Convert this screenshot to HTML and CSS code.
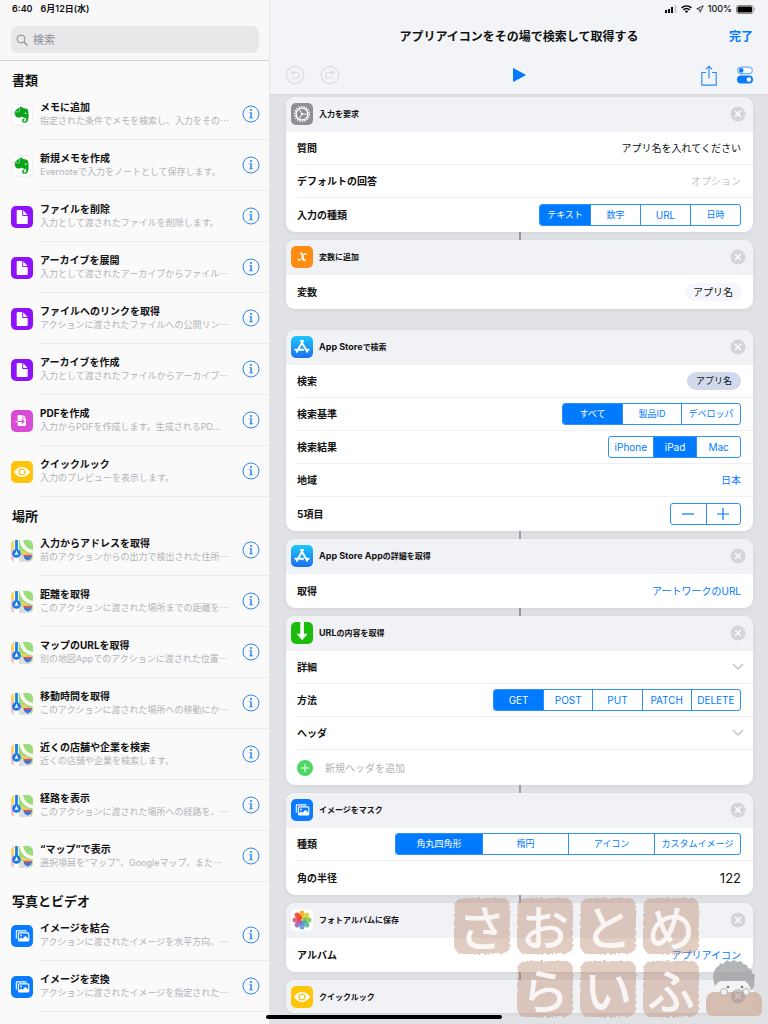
FILE: index.html
```html
<!DOCTYPE html>
<html lang="ja">
<head>
<meta charset="utf-8">
<meta name="viewport" content="width=device-width, initial-scale=1">
<title>アプリアイコンをその場で検索して取得する</title>
<link rel="stylesheet" href="styles.css">
</head>
<body>
<svg class="defs" aria-hidden="true">
  <defs>
    <linearGradient id="store-fill" x1="0" y1="0" x2="0" y2="1"><stop offset="0" stop-color="#1cc8fb"/><stop offset="1" stop-color="#1d6ff2"/></linearGradient>
    <clipPath id="app-clip"><rect width="22" height="22" rx="5"/></clipPath>
    <filter id="rough"><feTurbulence type="fractalNoise" baseFrequency="0.3" numOctaves="2" seed="4"/><feDisplacementMap in="SourceGraphic" scale="4" xChannelSelector="R" yChannelSelector="G"/></filter>
  </defs>
  <symbol id="i-evernote" viewBox="0 0 22 22">
    <rect x=".5" y=".5" width="21" height="21" rx="5" fill="#fff" stroke="#eeeeef"/>
    <path fill="#0ba51c" d="M8.600 3c1.500-.5 2.700.1 3.100.9l3.200.5c1.200.2 1.800.7 2.100 1.900.5 2 .7 4.200.6 6.200-.1 3.900-1.200 6.300-3.800 6.300-1.700 0-2.700-.9-2.700-2.300 0-1.300.8-2 2.200-2.100.5 0 .7.200.7.600 0 .4-.2.600-.6.600-.5.100-.8.400-.8.900s.4.900 1.100.9c1 0 1.500-.7 1.500-1.900 0-1.300-.7-1.700-2-1.800-1.300-.1-2.200-.5-2.700-1.200-.5.900-1.500 1.200-3.100 1-2.100-.2-3-1-3.500-3-.3-1.200-.4-2.400-.3-3.300L8 3.400z"/>
    <path fill="none" stroke="#fff" stroke-width=".5" d="M4 7.800h3.500c.7 0 1-.4 1-1V3.200"/>
    <path fill="#fff" d="M13.600 9.700c.3-.9.700-1.200 1.200-1.100.5.100.8.600.8 1.400-.6-.2-1.300-.3-2-.3z"/>
  </symbol>
  <symbol id="i-file" viewBox="0 0 22 22">
    <rect width="22" height="22" rx="5" fill="#8e12fb"/>
    <path fill="#fff" d="M6.800 4h4.400v5.200c0 .5.300.8.800.8h4.700v7c0 .7-.4 1.100-1.100 1.100H6.800c-.7 0-1.100-.4-1.100-1.100V5.100C5.700 4.400 6.100 4 6.800 4zM12.200 4.200l4.400 4.700h-4.400z"/>
  </symbol>
  <symbol id="i-pdf" viewBox="0 0 22 22">
    <rect width="22" height="22" rx="5" fill="#d94bd6"/>
    <path fill="#fff" d="M7.500 5h4v3.500H15V15c0 .6-.3.900-.9.900H7.500c-.5 0-.9-.3-.9-.9V5.900c0-.6.400-.9.900-.9zM12.200 5l2.700 2.800h-2.700z"/>
    <path fill="none" stroke="#d94bd6" stroke-width="1.200" d="M6.600 11.500h5.900M10.800 9.500l2 2-2 2"/><path stroke="#fff" d="M4.500 11.500h2"/>
  </symbol>
  <symbol id="i-eye" viewBox="0 0 22 22">
    <rect width="22" height="22" rx="5" fill="#ffc50a"/>
    <path fill="#fff" d="M3 11c4.400-6.700 11.600-6.700 16 0-4.400 6.700-11.600 6.700-16 0z"/>
    <circle cx="11" cy="11" r="3.600" fill="#ffc50a"/><circle cx="11" cy="11" r="2.300" fill="#fff"/>
  </symbol>
  <symbol id="i-map" viewBox="0 0 22 22">
    <g clip-path="url(#app-clip)">
      <rect width="22" height="22" fill="#9bdc7c"/>
      <path fill="#f7c1d2" d="M0 9h7v13H0z"/>
      <path fill="#fcd55c" d="M0 0h4v9H0z"/><path fill="#dcdde0" d="M7 13l15 8v1H7z"/>
      <path fill="#fff" d="M3 16l5-1v7H3z"/>
      <path fill="none" stroke="#fbfaf3" stroke-width="3.600" d="M10-1c1 8 5 12 13 13"/>
      <path fill="none" stroke="#fcd055" stroke-width="2.200" d="M6 11c5 1 11 3 17 8"/>
      <path stroke="#fff" stroke-width="4.500" d="M5.500 0v14"/><path stroke="#1c7fe8" stroke-width="2.800" d="M5.500 0v14"/>
      <circle cx="5.500" cy="13.500" r="4.300" fill="#1979e6"/><path fill="#fff" d="M5.500 10.600 7.500 15.300l-2-.8-2 .8z"/>
      <path fill="#3c78d2" stroke="#fff" stroke-width=".6" d="M12.500 15h8.500c.7 3-1 4.500-4.200 6-3.300-1.500-5-3-4.300-6z"/><path fill="#e2554d" d="M12.700 14.700h8l.2 1.800h-8.400z"/>
    </g>
  </symbol>
  <symbol id="i-image" viewBox="0 0 22 22">
    <rect width="22" height="22" rx="5" fill="#0a7aff"/>
    <path fill="none" stroke="#fff" stroke-width="1.100" d="M5.300 13.400V6.700c0-.5.300-.8.800-.8h9.400"/>
    <rect x="7.400" y="7.900" width="10.400" height="8" rx="1" fill="none" stroke="#fff" stroke-width="1.100"/>
    <circle cx="10" cy="10.400" r=".9" fill="#fff"/><path fill="#fff" d="M7.500 14.800 10 12.500l1.700 1.200 2.600-3 3.400 3.300v2H8z"/>
  </symbol>
  <symbol id="i-gear" viewBox="0 0 22 22">
    <rect width="22" height="22" rx="5" fill="#8e8e93"/>
    <circle cx="11" cy="11" r="7.300" fill="none" stroke="#fff" stroke-width="1.600" stroke-dasharray="1.300 1.248"/>
    <circle cx="11" cy="11" r="5.900" fill="none" stroke="#fff" stroke-width="1.300"/>
    <path stroke="#fff" stroke-width=".9" d="M11 11h5.500M11 11 8.200 6.200M11 11l-2.800 4.800"/><circle cx="11" cy="11" r="1.100" fill="#fff"/>
  </symbol>
  <symbol id="i-variable" viewBox="0 0 22 22">
    <rect width="22" height="22" rx="5" fill="#ff8d14"/>
    <path fill="none" stroke="#fff" stroke-width="1.900" d="M9.300 7.700c1.600-.5 2 .6 2.300 2.200l.4 2.500c.3 1.800 1 2.400 2.500 1.300"/>
    <path fill="none" stroke="#fff" stroke-width="1" stroke-linecap="round" d="M14.800 8c-1.200-.7-2 .2-3 2l-1.200 2.400c-.9 1.700-1.800 2.400-3 1.600"/>
    <circle cx="14.500" cy="8.200" r=".9" fill="#fff"/><circle cx="7.700" cy="13.700" r=".9" fill="#fff"/>
  </symbol>
  <symbol id="i-store" viewBox="0 0 22 22">
    <rect width="22" height="22" rx="5" fill="url(#store-fill)"/>
    <path fill="none" stroke="#fff" stroke-width="1.900" stroke-linecap="round" d="M12.100 4.800 7.300 13.200M9.900 4.800l6.300 11M4.300 13.700h7.900M15 13.700h2.700M6.300 15.200l-.4.700"/>
  </symbol>
  <symbol id="i-download" viewBox="0 0 22 22">
    <rect width="22" height="22" rx="5" fill="#1dbb0b"/>
    <path fill="#fff" d="M9.300 0h3.600v11.800h3.600L11.100 18.300 5.700 11.800h3.600z"/>
  </symbol>
  <symbol id="i-photos" viewBox="0 0 22 22">
    <rect width="22" height="22" rx="5" fill="#fff"/>
    <g fill-opacity=".88">
      <rect x="8.500" y="1.500" width="5" height="8.800" rx="2.500" fill="#f9a01b"/>
      <rect x="8.500" y="1.500" width="5" height="8.800" rx="2.500" fill="#d5d32a" transform="rotate(45 11 11)"/>
      <rect x="8.500" y="1.500" width="5" height="8.800" rx="2.500" fill="#84c341" transform="rotate(90 11 11)"/>
      <rect x="8.500" y="1.500" width="5" height="8.800" rx="2.500" fill="#4db79a" transform="rotate(135 11 11)"/>
      <rect x="8.500" y="1.500" width="5" height="8.800" rx="2.500" fill="#5f95d4" transform="rotate(180 11 11)"/>
      <rect x="8.500" y="1.500" width="5" height="8.800" rx="2.500" fill="#9268b8" transform="rotate(225 11 11)"/>
      <rect x="8.500" y="1.500" width="5" height="8.800" rx="2.500" fill="#e0526f" transform="rotate(270 11 11)"/>
      <rect x="8.500" y="1.500" width="5" height="8.800" rx="2.500" fill="#ee3f24" transform="rotate(315 11 11)"/>
    </g>
  </symbol>
  <symbol id="i-info" viewBox="0 0 18 18">
    <circle cx="9" cy="9" r="8" fill="none" stroke="#2b86ee"/>
    <circle cx="9" cy="5" r="1.100" fill="#2b86ee"/><path fill="#2b86ee" d="M7.200 7.200h2.600v5.200h1.300v.9H7v-.9h1.300V8.100H7.200z"/>
  </symbol>
  <symbol id="i-close" viewBox="0 0 16 16">
    <circle cx="8" cy="8" r="7.500" fill="#d4d5d9"/><path fill="none" stroke="#fff" stroke-width="1.400" d="m5 5 6 6M11 5l-6 6"/>
  </symbol>
  <symbol id="i-chevron" viewBox="0 0 12 8"><path fill="none" stroke="#c3c4c8" stroke-width="1.500" d="m1 1 5 5 5-5"/></symbol>
</svg>

<div class="app">
  <aside class="sidebar">
    <header class="sidebar-head">
      <div class="status status-left"><span>6:40</span><span>6月12日(水)</span></div>
      <label class="search">
        <svg width="12" height="12" viewBox="0 0 12 12" aria-hidden="true"><circle cx="5" cy="5" r="4" fill="none" stroke="#8e8e93"/><path stroke="#8e8e93" stroke-width="1.200" d="m8 8 3.500 3.500"/></svg>
        <input type="search" placeholder="検索" aria-label="検索">
      </label>
    </header>
    <div class="library">
      <section>
        <h2>書類</h2>
        <ul>
          <li><svg class="app-icon"><use href="#i-evernote"/></svg><div class="entry"><div class="entry-text"><h3>メモに追加</h3><p>指定された条件でメモを検索し、入力をその<span class="dots">…</span></p></div><button class="info" aria-label="情報"><svg><use href="#i-info"/></svg></button></div></li>
          <li><svg class="app-icon"><use href="#i-evernote"/></svg><div class="entry"><div class="entry-text"><h3>新規メモを作成</h3><p>Evernoteで入力をノートとして保存します。</p></div><button class="info" aria-label="情報"><svg><use href="#i-info"/></svg></button></div></li>
          <li><svg class="app-icon"><use href="#i-file"/></svg><div class="entry"><div class="entry-text"><h3>ファイルを削除</h3><p>入力として渡されたファイルを削除します。</p></div><button class="info" aria-label="情報"><svg><use href="#i-info"/></svg></button></div></li>
          <li><svg class="app-icon"><use href="#i-file"/></svg><div class="entry"><div class="entry-text"><h3>アーカイブを展開</h3><p>入力として渡されたアーカイブからファイル<span class="dots">…</span></p></div><button class="info" aria-label="情報"><svg><use href="#i-info"/></svg></button></div></li>
          <li><svg class="app-icon"><use href="#i-file"/></svg><div class="entry"><div class="entry-text"><h3>ファイルへのリンクを取得</h3><p>アクションに渡されたファイルへの公開リン<span class="dots">…</span></p></div><button class="info" aria-label="情報"><svg><use href="#i-info"/></svg></button></div></li>
          <li><svg class="app-icon"><use href="#i-file"/></svg><div class="entry"><div class="entry-text"><h3>アーカイブを作成</h3><p>入力として渡されたファイルからアーカイブ<span class="dots">…</span></p></div><button class="info" aria-label="情報"><svg><use href="#i-info"/></svg></button></div></li>
          <li><svg class="app-icon"><use href="#i-pdf"/></svg><div class="entry"><div class="entry-text"><h3>PDFを作成</h3><p>入力からPDFを作成します。生成されるPD...</p></div><button class="info" aria-label="情報"><svg><use href="#i-info"/></svg></button></div></li>
          <li><svg class="app-icon"><use href="#i-eye"/></svg><div class="entry"><div class="entry-text"><h3>クイックルック</h3><p>入力のプレビューを表示します。</p></div><button class="info" aria-label="情報"><svg><use href="#i-info"/></svg></button></div></li>
        </ul>
      </section>
      <section>
        <h2>場所</h2>
        <ul>
          <li><svg class="app-icon"><use href="#i-map"/></svg><div class="entry"><div class="entry-text"><h3>入力からアドレスを取得</h3><p>前のアクションからの出力で検出された住所<span class="dots">…</span></p></div><button class="info" aria-label="情報"><svg><use href="#i-info"/></svg></button></div></li>
          <li><svg class="app-icon"><use href="#i-map"/></svg><div class="entry"><div class="entry-text"><h3>距離を取得</h3><p>このアクションに渡された場所までの距離を<span class="dots">…</span></p></div><button class="info" aria-label="情報"><svg><use href="#i-info"/></svg></button></div></li>
          <li><svg class="app-icon"><use href="#i-map"/></svg><div class="entry"><div class="entry-text"><h3>マップのURLを取得</h3><p>別の地図Appでのアクションに渡された位置<span class="dots">…</span></p></div><button class="info" aria-label="情報"><svg><use href="#i-info"/></svg></button></div></li>
          <li><svg class="app-icon"><use href="#i-map"/></svg><div class="entry"><div class="entry-text"><h3>移動時間を取得</h3><p>このアクションに渡された場所への移動にか<span class="dots">…</span></p></div><button class="info" aria-label="情報"><svg><use href="#i-info"/></svg></button></div></li>
          <li><svg class="app-icon"><use href="#i-map"/></svg><div class="entry"><div class="entry-text"><h3>近くの店舗や企業を検索</h3><p>近くの店舗や企業を検索します。</p></div><button class="info" aria-label="情報"><svg><use href="#i-info"/></svg></button></div></li>
          <li><svg class="app-icon"><use href="#i-map"/></svg><div class="entry"><div class="entry-text"><h3>経路を表示</h3><p>このアクションに渡された場所への経路を、<span class="dots">…</span></p></div><button class="info" aria-label="情報"><svg><use href="#i-info"/></svg></button></div></li>
          <li><svg class="app-icon"><use href="#i-map"/></svg><div class="entry"><div class="entry-text"><h3>“マップ”で表示</h3><p>選択項目を“マップ”、Googleマップ、また<span class="dots">…</span></p></div><button class="info" aria-label="情報"><svg><use href="#i-info"/></svg></button></div></li>
        </ul>
      </section>
      <section>
        <h2>写真とビデオ</h2>
        <ul>
          <li><svg class="app-icon"><use href="#i-image"/></svg><div class="entry"><div class="entry-text"><h3>イメージを結合</h3><p>アクションに渡されたイメージを水平方向、<span class="dots">…</span></p></div><button class="info" aria-label="情報"><svg><use href="#i-info"/></svg></button></div></li>
          <li><svg class="app-icon"><use href="#i-image"/></svg><div class="entry"><div class="entry-text"><h3>イメージを変換</h3><p>アクションに渡されたイメージを指定された<span class="dots">…</span></p></div><button class="info" aria-label="情報"><svg><use href="#i-info"/></svg></button></div></li>
        </ul>
      </section>
    </div>
  </aside>

  <main class="editor">
    <header class="editor-head">
      <div class="status status-right">
        <svg width="12" height="8" viewBox="0 0 12 8" aria-hidden="true"><path d="M0 5h2v3H0zM3 4h2v4H3zM6 2h2v6H6z"/><path fill="#c8c9cd" d="M9.500 0h2v8h-2z"/></svg>
        <svg width="11" height="8" viewBox="0 0 11 8" aria-hidden="true"><path fill="none" stroke="#000" stroke-width="1.500" d="M.6 2.900c2.900-2.700 6.900-2.700 9.800 0M2.400 4.900c1.900-1.700 4.300-1.700 6.200 0"/><path d="M5.500 8 3.800 6.200c1-.9 2.400-.9 3.400 0z"/></svg>
        <svg width="8" height="8" viewBox="0 0 8 8" aria-hidden="true"><path fill="none" stroke="#222" stroke-width=".9" d="M7.200.8.800 3.900l3 .3.300 3z"/></svg>
        <span>100%</span>
        <svg width="20" height="9" viewBox="0 0 20 9" aria-hidden="true"><rect x=".5" y=".5" width="16.500" height="8" rx="2" fill="none" stroke="#888"/><rect x="1.500" y="1.500" width="14.500" height="6" rx="1"/><path fill="#999" d="M18 3c1.300.3 1.300 2.700 0 3z"/></svg>
      </div>
      <div class="title-bar">
        <h1>アプリアイコンをその場で検索して取得する</h1>
        <button class="done">完了</button>
      </div>
      <div class="toolbar">
        <div class="tools tools-start">
          <button aria-label="取り消す" disabled><svg width="20" height="20" viewBox="0 0 20 20"><g fill="none" stroke="#dcdde0" stroke-width="1.200"><circle cx="10" cy="10" r="8.700"/><path d="M8.500 5.500 6.300 7.500l2.200 2M6.500 7.500h5.300a2.700 2.700 0 0 1 0 5.500H7"/></g></svg></button>
          <button aria-label="やり直す" disabled><svg width="20" height="20" viewBox="0 0 20 20"><g fill="none" stroke="#dcdde0" stroke-width="1.200"><circle cx="10" cy="10" r="8.700"/><path d="m11.500 5.500 2.200 2-2.200 2M13.500 7.500H8.200a2.700 2.700 0 0 0 0 5.500H13"/></g></svg></button>
        </div>
        <button aria-label="実行"><svg width="14" height="16" viewBox="0 0 14 16"><path fill="#007aff" d="M1 1.500c0-.4.300-.5.600-.3l11.700 6.400c.4.200.4.600 0 .8L1.600 14.800c-.3.200-.6.100-.6-.3z"/></svg></button>
        <div class="tools tools-end">
          <button aria-label="共有"><svg width="16" height="21" viewBox="0 0 16 21"><path fill="none" stroke="#2587f5" stroke-width="1.100" d="M5 7.500H.8v12.600h14.400V7.500H11M8 13.500V1.300M4.800 4.400 8 1.200l3.200 3.200"/></svg></button>
          <button aria-label="設定"><svg width="16" height="18" viewBox="0 0 16 18"><rect x=".6" y="1.100" width="14.800" height="6.600" rx="3.300" fill="#fff" stroke="#4a9cf8"/><circle cx="4.200" cy="4.400" r="2.300" fill="#0a7aff"/><rect y="9.600" width="16" height="7.800" rx="3.900" fill="#0a7aff"/><circle cx="11.900" cy="13.500" r="2.200" fill="#fff"/></svg></button>
        </div>
      </div>
    </header>

    <div class="flow">
      <section class="card">
        <header><svg class="app-icon"><use href="#i-gear"/></svg><h2>入力を要求</h2><button class="close" aria-label="削除"><svg><use href="#i-close"/></svg></button></header>
        <div class="row"><label for="question">質問</label><input id="question" type="text" value="アプリ名を入れてください"></div>
        <div class="row"><label for="default-answer">デフォルトの回答</label><input id="default-answer" type="text" placeholder="オプション"></div>
        <div class="row"><span class="label" id="l-type">入力の種類</span><div class="segments segments-4" role="group" aria-labelledby="l-type"><button aria-pressed="true">テキスト</button><button>数字</button><button class="latin">URL</button><button>日時</button></div></div>
      </section>
      <div class="connector"></div>
      <section class="card">
        <header><svg class="app-icon"><use href="#i-variable"/></svg><h2>変数に追加</h2><button class="close" aria-label="削除"><svg><use href="#i-close"/></svg></button></header>
        <div class="row"><span class="label">変数</span><button class="pill">アプリ名</button></div>
      </section>
      <div class="break"></div>
      <section class="card">
        <header><svg class="app-icon"><use href="#i-store"/></svg><h2><span class="latin">App Store</span>で検索</h2><button class="close" aria-label="削除"><svg><use href="#i-close"/></svg></button></header>
        <div class="row"><span class="label">検索</span><button class="token">アプリ名</button></div>
        <div class="row"><span class="label" id="l-by">検索基準</span><div class="segments segments-3" role="group" aria-labelledby="l-by"><button aria-pressed="true">すべて</button><button>製品ID</button><button>デベロッパ</button></div></div>
        <div class="row"><span class="label" id="l-result">検索結果</span><div class="segments segments-device" role="group" aria-labelledby="l-result"><button class="latin">iPhone</button><button class="latin" aria-pressed="true">iPad</button><button class="latin">Mac</button></div></div>
        <div class="row"><span class="label">地域</span><button class="choice">日本</button></div>
        <div class="row"><span class="label" id="l-count">5項目</span><div class="segments segments-step" role="group" aria-labelledby="l-count"><button aria-label="減らす"><svg width="14" height="14" viewBox="0 0 14 14"><path stroke="#007aff" stroke-width="1.200" d="M1 7h12"/></svg></button><button aria-label="増やす"><svg width="14" height="14" viewBox="0 0 14 14"><path stroke="#007aff" stroke-width="1.200" d="M1 7h12M7 1v12"/></svg></button></div></div>
      </section>
      <div class="connector"></div>
      <section class="card">
        <header><svg class="app-icon"><use href="#i-store"/></svg><h2><span class="latin">App Store App</span>の詳細を取得</h2><button class="close" aria-label="削除"><svg><use href="#i-close"/></svg></button></header>
        <div class="row"><span class="label">取得</span><button class="choice">アートワークのURL</button></div>
      </section>
      <div class="connector"></div>
      <section class="card">
        <header><svg class="app-icon"><use href="#i-download"/></svg><h2><span class="latin">URL</span>の内容を取得</h2><button class="close" aria-label="削除"><svg><use href="#i-close"/></svg></button></header>
        <button class="row disclosure"><span class="label">詳細</span><svg><use href="#i-chevron"/></svg></button>
        <div class="row"><span class="label" id="l-method">方法</span><div class="segments segments-5" role="group" aria-labelledby="l-method"><button class="latin" aria-pressed="true">GET</button><button class="latin">POST</button><button class="latin">PUT</button><button class="latin">PATCH</button><button class="latin">DELETE</button></div></div>
        <button class="row disclosure"><span class="label">ヘッダ</span><svg><use href="#i-chevron"/></svg></button>
        <button class="row add"><svg width="16" height="16" viewBox="0 0 16 16" aria-hidden="true"><circle cx="8" cy="8" r="8" fill="#4cd964"/><path stroke="#fff" d="M4 8h8M8 4v8"/></svg><span>新規ヘッダを追加</span></button>
      </section>
      <div class="connector"></div>
      <section class="card">
        <header><svg class="app-icon"><use href="#i-image"/></svg><h2>イメージをマスク</h2><button class="close" aria-label="削除"><svg><use href="#i-close"/></svg></button></header>
        <div class="row"><span class="label" id="l-shape">種類</span><div class="segments segments-wide" role="group" aria-labelledby="l-shape"><button aria-pressed="true">角丸四角形</button><button>楕円</button><button>アイコン</button><button>カスタムイメージ</button></div></div>
        <div class="row"><label for="radius">角の半径</label><input id="radius" class="number" type="text" inputmode="numeric" value="122"></div>
      </section>
      <div class="connector"></div>
      <section class="card">
        <header><svg class="app-icon"><use href="#i-photos"/></svg><h2>フォトアルバムに保存</h2><button class="close" aria-label="削除"><svg><use href="#i-close"/></svg></button></header>
        <div class="row"><span class="label">アルバム</span><button class="choice">アプリアイコン</button></div>
      </section>
      <div class="connector"></div>
      <section class="card card-closed">
        <header><svg class="app-icon"><use href="#i-eye"/></svg><h2>クイックルック</h2><button class="close" aria-label="削除"><svg><use href="#i-close"/></svg></button></header>
      </section>
    </div>
  </main>

  <div class="watermark">
    <span>さ</span><span>お</span><span>と</span><span>め</span>
    <span class="second-line">ら</span><span>い</span><span>ふ</span>
    <svg width="56" height="58" viewBox="0 0 56 58" aria-hidden="true">
      <path fill="#f2f2f3" fill-opacity=".8" d="M10 22h36c4 5 3 14-2 16H12c-5-3-6-11-2-16z"/>
      <path fill="#9a9b9e" fill-opacity=".75" d="M9 27C6 17 7 12 11 8l2-1 1-3 3 1 4-4 3 2 4-2 3 2 4-1 2 3 4 1 1 3 3 1 1 4 3 2-1 6c1 5 0 8-3 9-1-4-3-7-6-9H16c-4 0-5 3-7 5z"/>
      <path fill="#d1b0a1" fill-opacity=".8" d="M8 33h40c5 0 8 4 8 9v9c0 4-2 6-7 6H8c-6 0-8-3-8-8v-6c0-6 3-10 8-10z"/>
      <g fill="#77787b"><circle cx="22" cy="28" r="1.300"/><circle cx="36" cy="28" r="1.300"/></g>
      <g fill="#f2f2f3" stroke="#a5a5a8" stroke-width=".8"><circle cx="18" cy="33" r="3.500"/><circle cx="40" cy="33" r="3.500"/></g>
      <circle cx="32" cy="37" r="7" fill="#9a9190" fill-opacity=".45"/>
      <path stroke="#d2c6c1" stroke-width="1.200" d="m29 34 6 6M35 34l-6 6"/>
    </svg>
  </div>
  <div class="home-indicator"></div>
</div>
</body>
</html>
```
FILE: styles.css
```css
* { box-sizing: border-box; }

body {
  margin: 0;
  font-family: Inter, "Noto Sans CJK JP", sans-serif;
  font-size: 10px;
  line-height: 14px;
  color: #111;
}

h1, h2, h3, p, ul { margin: 0; padding: 0; }
ul { list-style: none; }
button, input { font: inherit; color: inherit; margin: 0; padding: 0; border: 0; background: none; }
button { display: inline-flex; align-items: center; justify-content: center; }
svg { display: block; flex: none; }
.defs { position: absolute; width: 0; height: 0; }

.app {
  position: relative;
  display: grid;
  grid-template-columns: 270px minmax(0, 1fr);
  height: 100vh;
  overflow: hidden;
}

.app-icon { width: 22px; height: 22px; }

.status { display: flex; align-items: center; height: 18px; font-size: 9px; font-weight: 600; }

/* Sidebar */
.sidebar {
  display: flex;
  flex-direction: column;
  min-height: 0;
  background: #fafafb;
  border-right: 1px solid #e6e6e9;
}
.sidebar-head {
  flex: none;
  height: 61px;
  padding: 0 10px 0 11px;
  background: #f8f8f9;
  border-bottom: 1px solid #cfcfd2;
}
.status-left { gap: 8px; padding-left: 1px; }
.search {
  display: flex;
  align-items: center;
  gap: 5px;
  height: 27px;
  margin-top: 8px;
  padding: 0 5px;
  border-radius: 7px;
  background: #e8e8ea;
}
.search input { flex: 1; min-width: 0; font-size: 11px; outline: 0; appearance: none; }
.search input::placeholder { color: #8e8e93; opacity: 1; }

.library { flex: 1; min-height: 0; overflow: hidden; }
.library h2 { height: 28px; padding: 9px 12px 0; font-size: 13px; line-height: 20px; font-weight: 700; }
.library li { display: flex; align-items: center; gap: 7px; padding-left: 11px; }
.entry {
  flex: 1;
  min-width: 0;
  display: flex;
  align-items: center;
  justify-content: space-between;
  height: 51px;
  padding-right: 9px;
  border-bottom: 1px solid #ececef;
}
.entry-text { white-space: nowrap; }
.entry h3 { font-size: 10px; font-weight: 700; line-height: 14px; }
.entry p { font-size: 9px; line-height: 14px; color: #b3b3b7; }
.dots { font-family: "Noto Sans CJK JP", sans-serif; }
.info svg { width: 18px; height: 18px; }

/* Editor */
.editor { display: flex; flex-direction: column; min-width: 0; min-height: 0; background: #e1e2e6; }
.editor-head {
  flex: none;
  height: 95px;
  padding: 0 15px;
  background: #f3f4f7;
  border-bottom: 1px solid #d6d7da;
}
.status-right { justify-content: flex-end; gap: 4px; margin-right: -3px; font-weight: 500; }
.title-bar { display: grid; grid-template-columns: 1fr auto 1fr; align-items: center; height: 38px; }
.title-bar h1 { grid-column: 2; font-size: 12px; line-height: 18px; font-weight: 700; }
.done { justify-self: end; font-size: 12px; font-weight: 700; color: #007aff; }
.toolbar { display: grid; grid-template-columns: 1fr auto 1fr; align-items: center; height: 38px; }
.tools { display: flex; align-items: center; }
.tools-start { gap: 15px; }
.tools-end { justify-content: flex-end; gap: 20px; }

.flow { flex: 1; min-height: 0; overflow: hidden; padding: 2px 15px 0 16px; }
.connector { width: 2px; height: 8px; margin: 0 auto; background: #9b9ca1; }
.break { height: 21px; }

.card { border-radius: 9px; background: #fff; box-shadow: 0 1px 5px rgba(0, 0, 0, .06); overflow: hidden; }
.card > header {
  display: flex;
  align-items: center;
  gap: 6px;
  height: 35px;
  padding: 0 7px 2px 5px;
  background: #f1f2f6;
}
.card-closed > header { height: 33px; padding-bottom: 0; }
.card h2 { flex: 1; font-size: 8px; line-height: 14px; font-weight: 700; }
.card h2 .latin { font-size: 9px; }
.close svg { width: 16px; height: 16px; }

.row {
  display: flex;
  align-items: center;
  justify-content: space-between;
  height: 33px;
  margin-left: 11px;
  padding-right: 12px;
  border-bottom: 1px solid #f0f0f2;
}
.row:last-child { height: 34px; border-bottom: 0; }
.row label, .label { flex: none; font-weight: 700; }
.row input { flex: 1; min-width: 0; text-align: right; outline: 0; }
.row input::placeholder { color: #c7c7cc; opacity: 1; }
.row .number { font-size: 13px; }
.choice { color: #007aff; }
.disclosure { width: calc(100% - 11px); padding-right: 9px; border-bottom: 1px solid #f0f0f2; }
.disclosure svg { width: 12px; height: 8px; }
.row.add { width: calc(100% - 11px); height: 35px; justify-content: flex-start; gap: 12px; color: #b3b3b7; }

.pill { padding: 2px 8px; border-radius: 9px; background: #f5f6fb; }
.token { padding: 2px 9px; border-radius: 9px; background: #d0daec; font-size: 9px; }

.segments {
  display: grid;
  grid-auto-flow: column;
  grid-auto-columns: minmax(0, 1fr);
  height: 22px;
  border: 1px solid #2e8ff9;
  border-radius: 3px;
  overflow: hidden;
}
.segments button { font-size: 9px; color: #007aff; white-space: nowrap; }
.segments .latin { font-size: 10px; }
.segments button + button { border-left: 1px solid #2e8ff9; }
.segments button[aria-pressed="true"] { background: #007aff; color: #fff; }
.segments-3 { width: 179px; }
.segments-4 { width: 202px; }
.segments-5 { width: 248px; }
.segments-wide { width: 346px; }
.segments-device { width: 133px; }
.segments-step { width: 71px; }

/* Overlays */
.watermark {
  position: absolute;
  z-index: 1;
  right: 6px;
  bottom: 7px;
  display: grid;
  grid-template-columns: repeat(5, 56px);
  grid-auto-rows: 56px;
  gap: 7px;
  align-items: end;
  pointer-events: none;
}
.watermark span {
  position: relative;
  height: 56px;
  font-family: "Noto Sans CJK JP", sans-serif;
  font-size: 48px;
  line-height: 54px;
  font-weight: 500;
  text-align: center;
  color: rgba(255, 255, 255, .85);
}
.watermark span::before {
  content: "";
  position: absolute;
  inset: 0;
  z-index: -1;
  border-radius: 9px;
  background: rgba(185, 135, 110, .42);
  filter: url(#rough);
}
.watermark .second-line { grid-column: 2; }

.home-indicator {
  position: absolute;
  left: 50%;
  bottom: 5px;
  width: 236px;
  height: 4px;
  margin-left: -118px;
  border-radius: 2px;
  background: #000;
}
```
